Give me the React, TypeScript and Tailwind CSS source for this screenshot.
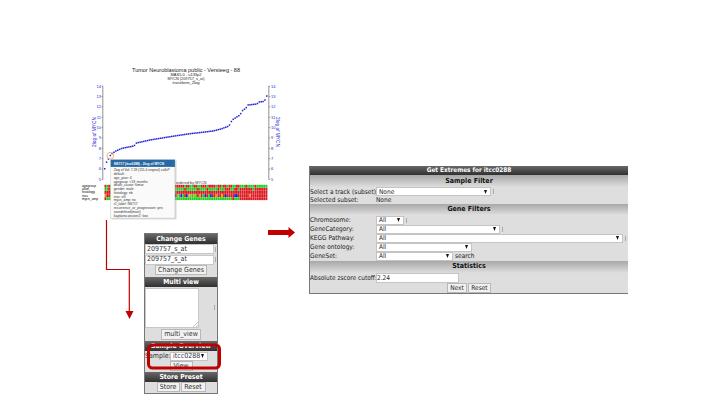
import React from "react";

const SANS = "DejaVu Sans Condensed, DejaVu Sans, sans-serif";
const ARIAL = "Liberation Sans, Arial, sans-serif";

const KNOTS: [number, number][] = [
  [104.5, 169.5], [106.6, 162], [108.4, 159], [110.3, 155.5], [112.2, 153.5], [116, 151], [122, 148.3], [134, 146],
  [136.5, 143], [150, 140], [170, 136.7], [190, 133.7], [205, 132], [213, 131], [221, 129], [229, 126], [231, 122],
  [233, 119.5], [236, 117.5], [240, 115], [242, 111], [246, 108], [248, 105], [257, 104], [259, 102], [263.5, 101.5],
  [265, 100], [266.8, 96],
];

function curveAt(x: number) {
  for (let i = 1; i < KNOTS.length; i++) {
    const [x1, y1] = KNOTS[i - 1];
    const [x2, y2] = KNOTS[i];
    if (x <= x2) return y1 + ((y2 - y1) * (x - x1)) / (x2 - x1);
  }
  return 96;
}

const COLORS: Record<string, string> = { r: "#dc1822", g: "#1fd023", b: "#2417d8", o: "#d8a01c" };

// One letter per sample, 88 samples per track; the middle stretch lies under the tooltip
const TRACKS = [
  "rgrg" + "r".repeat(34) + "rrrrrgrrggrrggrrrgrrrrgrrgrrgrrggrrgggrggggrggggg".padEnd(50, "g"),
  "ggrg" + "g".repeat(34) + "gggggrggggggrggggrgggggrgggrrrggrrgrrrrrrrgrrrr".padEnd(50, "r"),
  "r".repeat(88),
  "orro" + "r".repeat(34) + "bogbgrboogogrorgbrgbrrorrorbrrrrbbrrrrrrorrrr".padEnd(50, "r"),
  "rggg" + "g".repeat(34) + "g".repeat(31) + "rggg" + "r".repeat(15),
];

const TOOLTIP: [string, number][] = [
  ["2log of Val: 7.28 (155.4 original) callsP", 56], ["default:", 11], ["age_year: 4", 18], ["agegroup: <18_months", 34],
  ["death_cause: tumor", 30], ["gender: male", 20], ["histology: nb", 19], ["inss: st3", 12], ["mycn_amp: no", 22],
  ["r2_label: NS717", 24], ["recurrence_or_progression: yes", 49], ["userdefined(main)", 27], ["kaplanscanuser2: low", 34],
];

const TRACK_LABELS: [string, number][] = [["agegroup", 14], ["alive", 7], ["histology", 13], ["inss", 6], ["mycn_amp", 16]];

function Chart() {
  const ticks = [14, 13, 12, 11, 10, 9, 8, 7, 6, 5];
  const cell = 163 / 88;
  return (
    <svg width="210" height="158" viewBox="75 62 210 158" className="block shrink-0" fontFamily={ARIAL}>
      <g textAnchor="middle" fill="#222">
        <text x="186" y="72" fontSize="5.7" textLength="108" lengthAdjust="spacingAndGlyphs">Tumor Neuroblastoma public - Versteeg - 88</text>
        <g fontSize="4">
          <text x="186" y="75.8" textLength="31" lengthAdjust="spacingAndGlyphs">MAS5.0 - u133p2</text>
          <text x="186" y="79.7" textLength="37" lengthAdjust="spacingAndGlyphs">MYCN (209757_s_at)</text>
          <text x="186" y="83.5" textLength="27" lengthAdjust="spacingAndGlyphs">transform_2log</text>
        </g>
      </g>
      <path d="M102.8 86V179.5M268.8 86V179.5" stroke="#777" strokeWidth=".8" />
      {ticks.map((t, i) => {
        const y = 86.2 + i * 10.35;
        return (
          <g key={t} fontSize="4" fill="#2424d8">
            <path d={`M101.5 ${y}h1.5M268.8 ${y}h1.5`} stroke="#777" strokeWidth=".7" />
            <text x="101" y={y + 1.4} textAnchor="end">{t}</text>
            <text x="271" y={y + 1.4}>{t}</text>
          </g>
        );
      })}
      <g fontSize="4.8" fill="#2020cc" textAnchor="middle">
        <text transform="translate(95.6 132) rotate(-90)" textLength="30" lengthAdjust="spacingAndGlyphs">2log of MYCN</text>
        <text transform="translate(275.8 132) rotate(90)" textLength="30" lengthAdjust="spacingAndGlyphs">2log of MYCN</text>
      </g>
      {Array.from({ length: 88 }, (_, i) => {
        const x = 104.7 + i * 1.863;
        return <rect key={i} x={x - 0.75} y={curveAt(x) - 0.75} width="1.5" height="1.5" fill="#2020d8" />;
      })}
      <circle cx="110.3" cy="155.7" r="3.4" fill="none" stroke="#f5a45c" strokeWidth=".9" />
      <text x="206.5" y="183.8" fontSize="3.9" fill="#333" textAnchor="end" textLength="46" lengthAdjust="spacingAndGlyphs">samples ordered by MYCN</text>
      <g fontSize="3" fill="#000">
        {TRACK_LABELS.map(([t, w], i) => (
          <text key={t} x="82" y={187.2 + i * 3.1} textLength={w} lengthAdjust="spacingAndGlyphs">{t}</text>
        ))}
      </g>
      {TRACKS.map((track, r) =>
        track.split("").map((c, i) => (
          <rect key={`${r}-${i}`} x={104.5 + i * cell} y={184.8 + r * 3.1} width={cell - 0.1} height="2.9" fill={COLORS[c]} />
        ))
      )}
      <rect x="111.5" y="160.4" width="65" height="59" fill="#999" opacity=".4" />
      <rect x="110.7" y="159.7" width="64.2" height="58.4" fill="#fafafa" stroke="#c8c8c8" strokeWidth=".5" />
      <rect x="110.7" y="159.7" width="64.2" height="7.2" fill="#2769a4" />
      <text x="114" y="164.8" fontSize="4" fontWeight="bold" fill="#fff" textLength="50" lengthAdjust="spacingAndGlyphs">NS717 (itcc0288) - 2log of MYCN</text>
      <g fontSize="3.6" fill="#333">
        {TOOLTIP.map(([t, w], i) => (
          <text key={t} x="113.7" y={171.4 + i * 3.76} textLength={w} lengthAdjust="spacingAndGlyphs">{t}</text>
        ))}
      </g>
    </svg>
  );
}

function Bar({ children, className = "" }: { children: React.ReactNode; className?: string }) {
  return (
    <div className={`flex shrink-0 items-center justify-center bg-linear-to-b from-[#696969] to-[#303030] font-bold text-white ${className}`}>
      {children}
    </div>
  );
}

function Section({ children, className }: { children: React.ReactNode; className: string }) {
  return (
    <div className={`flex shrink-0 items-center justify-center bg-linear-to-b from-[#a8a8a8] to-[#dedede] text-[7px] leading-none font-bold text-[#111] ${className}`}>
      {children}
    </div>
  );
}

function Select({ value, className }: { value: string; className: string }) {
  return (
    <span className={`flex h-[9px] shrink-0 items-center justify-between border border-[#c4c4c4] bg-white pr-[3px] pl-[2px] ${className}`}>
      {value}
      <svg width="3" height="4" viewBox="0 0 3 4" className="shrink-0"><path d="M0 0h3L1.5 4z" fill="#111" /></svg>
    </span>
  );
}

function Info() {
  return <span className="ml-[2px] h-[5px] w-px shrink-0 bg-[#aaa]" />;
}

function Row({ label, info, children }: { label: string; info?: boolean; children: React.ReactNode }) {
  return (
    <div className="flex h-[9.1px] shrink-0 items-center">
      <span className="w-[66px] shrink-0">{label}</span>
      {children}
      {info && <Info />}
    </div>
  );
}

function Button({ children, className }: { children: React.ReactNode; className: string }) {
  return (
    <span className={`flex shrink-0 items-center justify-center border border-[#b8b8b8] bg-[#f1f1f1] ${className}`}>{children}</span>
  );
}

function Extremes() {
  return (
    <section
      className="flex h-[128px] w-[319px] shrink-0 flex-col border-b border-l border-[#777] bg-[#dedede] text-[6.5px] leading-none whitespace-nowrap text-[#222]"
      style={{ fontFamily: SANS }}
    >
      <Bar className="h-[9px] text-[6.4px]">Get Extremes for itcc0288</Bar>
      <Section className="h-[12.4px]">Sample Filter</Section>
      <Row label="Select a track (subset)" info><Select value="None" className="w-[115px]" /></Row>
      <div className="flex h-[7.5px] shrink-0 items-center"><span className="w-[66px]">Selected subset:</span>None</div>
      <Section className="h-[11px]">Gene Filters</Section>
      <div className="flex shrink-0 flex-col pt-[0.5px]">
        <Row label="Chromosome:" info><Select value="All" className="w-[28px]" /></Row>
        <Row label="GeneCategory:" info><Select value="All" className="w-[124px]" /></Row>
        <Row label="KEGG Pathway:" info><Select value="All" className="w-[247px]" /></Row>
        <Row label="Gene ontology:"><Select value="All" className="w-[96px]" /></Row>
        <Row label="GeneSet:"><Select value="All" className="w-[77px]" /><span className="ml-[2px]">search</span></Row>
      </div>
      <Section className="h-[12px]">Statistics</Section>
      <div className="flex h-[10px] shrink-0 items-center">
        <span className="w-[66px] shrink-0">Absolute zscore cutoff:</span>
        <span className="flex h-[10px] w-[83px] items-center border border-[#c4c4c4] bg-white">2.24</span>
      </div>
      <div className="flex h-[10px] shrink-0 justify-center">
        <Button className="h-[10px] w-[20px]">Next</Button>
        <Button className="ml-px h-[10px] w-[23px]">Reset</Button>
      </div>
    </section>
  );
}

function Sidebar() {
  return (
    <aside
      className="ml-[69px] flex h-[161px] w-[74px] shrink-0 flex-col border border-[#777] bg-[#dedede] text-[7px] leading-none whitespace-nowrap text-[#333]"
      style={{ fontFamily: SANS }}
    >
      <Bar className="h-[10px] text-[6.8px]">Change Genes</Bar>
      {[0, 1].map((i) => (
        <div key={i} className="flex h-[10.5px] shrink-0 items-center">
          <span className="flex h-[10px] w-[69px] items-center border border-[#c8c8c8] bg-white pl-px">209757_s_at</span>
          <span className="ml-px h-[5px] w-px bg-[#aaa]" />
        </div>
      ))}
      <div className="flex h-[12px] shrink-0 justify-center"><Button className="h-[10px] w-[52px]">Change Genes</Button></div>
      <Bar className="h-[10px] text-[6.8px]">Multi view</Bar>
      <div className="flex h-[41px] shrink-0 items-center">
        <span className="flex h-[40px] w-[54px] items-end justify-end border border-[#c8c8c8] bg-white">
          <svg width="5" height="5"><path d="M0 5L5 0M3 5L5 3" stroke="#999" strokeWidth=".6" /></svg>
        </span>
        <span className="ml-[15px] h-[5px] w-px bg-[#aaa]" />
      </div>
      <div className="flex h-[13px] shrink-0 justify-center pt-px"><Button className="h-[11px] w-[40px]">multi_view</Button></div>
      <Bar className="h-[10px] text-[6.8px]">Sample Overview</Bar>
      <div className="flex h-[10px] shrink-0 items-center">
        <span className="w-[25px] shrink-0">Sample:</span><Select value="itcc0288" className="w-[38px]" />
      </div>
      <div className="flex h-[11px] shrink-0 justify-center"><Button className="h-[10px] w-[23px]">View</Button></div>
      <Bar className="h-[10px] text-[6.8px]">Store Preset</Bar>
      <div className="flex shrink-0 justify-center gap-px">
        <Button className="h-[10px] w-[23px]">Store</Button>
        <Button className="h-[10px] w-[25px]">Reset</Button>
      </div>
    </aside>
  );
}

export default function App() {
  return (
    <main className="relative flex h-[416px] w-[720px] overflow-hidden bg-white pl-[75px]">
      <div className="flex w-[234px] shrink-0 flex-col pt-[62px]">
        <Chart />
        <div className="h-[13px] shrink-0" />
        <Sidebar />
      </div>
      <div className="pt-[166px]"><Extremes /></div>
      <svg className="pointer-events-none absolute inset-0" width="720" height="416">
        <path d="M106.5 220V269.5H129.3V312" fill="none" stroke="#c00000" strokeWidth="1.2" />
        <path d="M125.5 311h8l-4 8z" fill="#c00000" />
        <path d="M268 230h20.5v-3l6.5 5.5-6.5 5.5v-3h-20.5z" fill="#c00000" />
        <rect x="148.5" y="345" width="71" height="23" rx="4" fill="none" stroke="#c00000" strokeWidth="3" />
      </svg>
    </main>
  );
}
